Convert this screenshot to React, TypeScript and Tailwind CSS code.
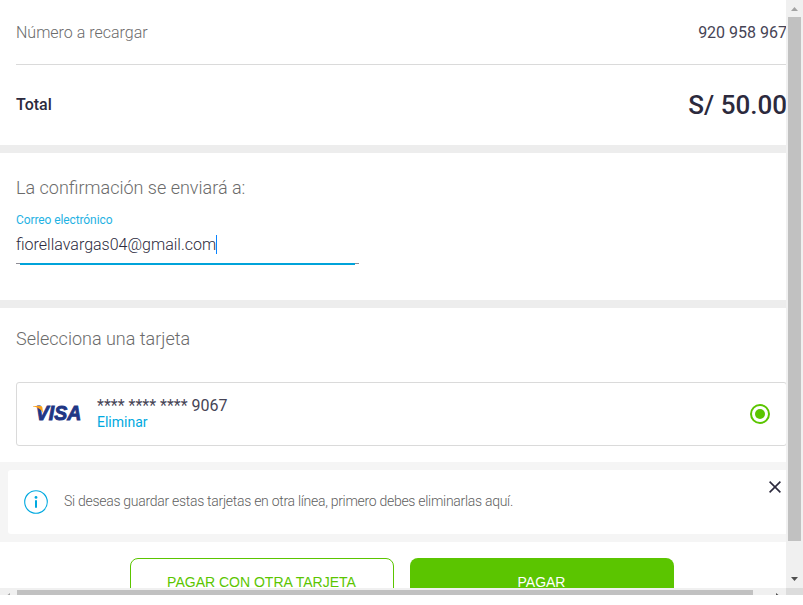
import React from "react";

function VisaLogo() {
  return (
    <svg className="h-[24px] w-[52px] shrink-0" viewBox="0 0 52 24">
      <text
        x="2.8"
        y="18.4"
        textLength="45.4"
        lengthAdjust="spacingAndGlyphs"
        fill="#1f3684"
        stroke="#1f3684"
        strokeWidth="0.9"
        fontFamily="'Liberation Sans', Arial, sans-serif"
        fontStyle="italic"
        fontWeight="700"
        fontSize="19.5"
      >
        VISA
      </text>
      <path d="M0 4H7.4C8.6 4 9.2 4.6 9.4 5.5L10 11.2C8.2 7.2 5 5.3 0 4.5Z" fill="#f9a01b" />
    </svg>
  );
}

function Separator() {
  return <div className="h-2 shrink-0 bg-[#ededed]" />;
}

function VerticalScrollbar() {
  return (
    <div className="flex w-[17px] flex-col bg-[#f0f0f0]">
      <svg className="h-[17px] w-[17px]" viewBox="0 0 17 17">
        <path d="M5 11L8.5 7L12 11Z" fill="#a3a3a3" />
      </svg>
      <div className="ml-[2px] h-[524px] w-[13px] bg-[#c1c1c1]" />
      <svg className="mt-[29px] h-[17px] w-[17px]" viewBox="0 0 17 17">
        <path d="M5 7L8.5 11L12 7Z" fill="#505050" />
      </svg>
    </div>
  );
}

function HorizontalScrollbar() {
  return (
    <div className="flex h-[7px] w-[803px] bg-[#f0f0f0]">
      <svg className="h-[7px] w-[17px]" viewBox="0 0 17 7">
        <path d="M10 5V7H7.5Z" fill="#a3a3a3" />
      </svg>
      <div className="mt-[2px] h-[5px] w-[736px] bg-[#c1c1c1]" />
      <svg className="ml-[16px] h-[7px] w-[17px]" viewBox="0 0 17 7">
        <path d="M7 5V7H9.5Z" fill="#505050" />
      </svg>
      <div className="h-[7px] w-[17px] bg-[#dcdcdc]" />
    </div>
  );
}

export default function App() {
  return (
    <div className="h-[605px] w-[803px] overflow-hidden bg-white font-['Roboto',sans-serif] text-[#2c2a3d]">
      <div className="flex h-[588px]">
        <main className="flex w-[786px] flex-col overflow-hidden">
          <section className="h-[145px] w-[787px] shrink-0 pl-4">
            <div className="flex h-[65px] items-center justify-between border-b border-[#dadada] pt-[2px] text-base">
              <span className="font-light text-[#6b6b6b]">Número a recargar</span>
              <span className="text-[#464455]">920 958 967</span>
            </div>
            <div className="flex h-[79px] items-center justify-between">
              <span className="text-base font-medium">Total</span>
              <span className="pt-[2px] text-[26px] font-medium">S/ 50.00</span>
            </div>
          </section>
          <Separator />
          <section className="h-[147px] shrink-0 pl-4 pt-[21px]">
            <h2 className="text-[18px] font-light leading-7 text-[#6b6b6b]">La confirmación se enviará a:</h2>
            <div className="mt-[10px] text-xs leading-4 tracking-[-0.1px] text-[#1fb2e3]">Correo electrónico</div>
            <div className="mt-[6px] flex h-[21px] items-center">
              <span className="text-base font-light">fiorellavargas04@gmail.com</span>
              <span className="h-[19px] w-px bg-[#0a84ff]" />
            </div>
            <div className="mt-[8px] h-px w-[343px] bg-[#8e8d96] pl-1">
              <div className="h-[2px] w-[335px] bg-[#00a3da]" />
            </div>
          </section>
          <Separator />
          <section className="h-[154px] shrink-0 pl-4 pt-[17px]">
            <h2 className="text-[18px] font-light leading-7 text-[#6b6b6b]">Selecciona una tarjeta</h2>
            <div className="mt-[29px] flex h-[64px] w-[771px] items-center rounded-[3px] border border-[#dadada] pl-4">
              <VisaLogo />
              <div className="ml-[12px] flex-1">
                <div className="text-base leading-[18px] text-[#464455]">**** **** **** 9067</div>
                <div className="-mt-px mb-px text-sm leading-4 text-[#00a9e0]">Eliminar</div>
              </div>
              <div className="mr-4 flex h-5 w-5 items-center justify-center rounded-full border-2 border-[#5bc500]">
                <div className="h-[10px] w-[10px] rounded-full bg-[#5bc500]" />
              </div>
            </div>
          </section>
          <section className="h-[80px] shrink-0 bg-[#f5f5f5] py-2 pl-2">
            <div className="flex h-[64px] rounded-l-[3px] bg-white pl-4">
              <svg className="mt-5 h-6 w-6" viewBox="0 0 24 24" fill="none">
                <circle cx="12" cy="12" r="11.3" stroke="#00a9e0" strokeWidth="1.1" />
                <circle cx="12" cy="7.4" r="1.4" fill="#00a9e0" />
                <path d="M12 10.3V17.8" stroke="#00a9e0" strokeWidth="2" />
              </svg>
              <p className="ml-4 mt-[21px] flex-1 text-sm font-light leading-5 tracking-[-0.29px] text-[#5f5f5f]">
                Si deseas guardar estas tarjetas en otra línea, primero debes eliminarlas aquí.
              </p>
              <svg className="mr-[5px] mt-[11px] h-3 w-3" viewBox="0 0 12 12">
                <path d="M.6.6L11.4 11.4M11.4.6L.6 11.4" stroke="#2c2a3d" strokeWidth="1.6" />
              </svg>
            </div>
          </section>
          <section className="flex h-[64px] shrink-0 gap-4 pl-[130px] pt-4">
            <button className="flex h-12 w-[264px] items-center justify-center rounded-lg border border-[#5bc500] pr-px font-['Liberation_Sans',Arial,sans-serif] text-sm text-[#5bc500]">
              PAGAR CON OTRA TARJETA
            </button>
            <button className="flex h-12 w-[264px] items-center justify-center rounded-lg bg-[#5bc500] pr-px font-['Liberation_Sans',Arial,sans-serif] text-sm text-white">
              PAGAR
            </button>
          </section>
        </main>
        <VerticalScrollbar />
      </div>
      <HorizontalScrollbar />
    </div>
  );
}
